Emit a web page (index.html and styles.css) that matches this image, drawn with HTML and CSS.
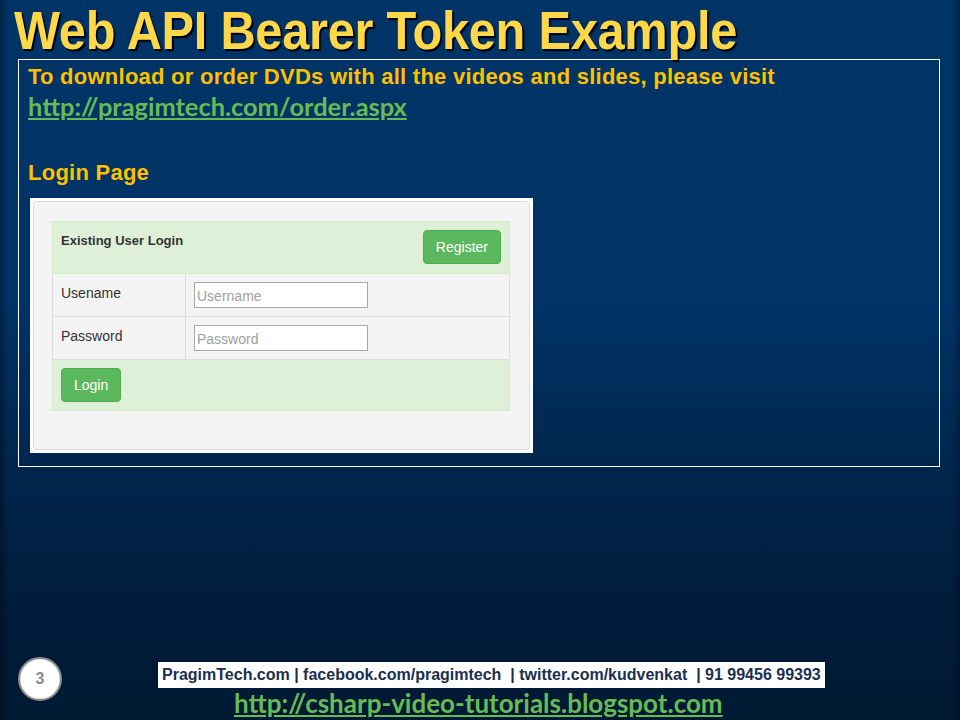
FILE: index.html
```html
<!DOCTYPE html>
<html>
<head>
<meta charset="utf-8">
<link rel="stylesheet" href="styles.css">
</head>
<body>
<div class="slide">
  <h1 class="title"><span class="title-text">Web API Bearer Token Example</span></h1>
  <div class="content">
    <p class="intro">To download or order DVDs with all the videos and slides, please visit</p>
    <a class="order-link" href="#">http://pragimtech.com/order.aspx</a>
    <h2 class="subhead">Login Page</h2>
    <div class="shot">
      <div class="panel">
        <table class="login">
          <tr class="head-row">
            <th colspan="2">
              <div class="head-inner">
                <span class="head-title">Existing User Login</span>
                <button class="btn">Register</button>
              </div>
            </th>
          </tr>
          <tr class="field-row">
            <td class="label">Usename</td>
            <td class="field"><input class="inp" type="text" placeholder="Username"></td>
          </tr>
          <tr class="field-row">
            <td class="label">Password</td>
            <td class="field"><input class="inp" type="password" placeholder="Password"></td>
          </tr>
          <tr class="foot-row">
            <td colspan="2"><button class="btn">Login</button></td>
          </tr>
        </table>
      </div>
    </div>
  </div>
  <div class="footer">
    <div class="num">3</div>
    <div class="footer-col">
      <div class="bar">PragimTech.com | facebook.com/pragimtech &nbsp;| twitter.com/kudvenkat &nbsp;| 91 99456 99393</div>
      <a class="blog-link" href="#">http://csharp-video-tutorials.blogspot.com</a>
    </div>
  </div>
</div>
</body>
</html>
```

FILE: styles.css
```css
html, body {
  margin: 0;
  padding: 0;
}
body {
  width: 960px;
  height: 720px;
  overflow: hidden;
}
.slide {
  width: 960px;
  height: 720px;
  display: flex;
  flex-direction: column;
  background:
    linear-gradient(to right, rgba(0,0,0,0.35) 0px, rgba(0,0,0,0) 8px, rgba(0,0,0,0) 952px, rgba(0,0,0,0.25) 960px),
    linear-gradient(to bottom, #003366 0%, #003366 42%, #00264d 65%, #001c3a 85%, #001933 100%);
}
.title {
  margin: 0;
  height: 59px;
  padding-left: 14px;
  font-family: "Liberation Sans Narrow", "Liberation Sans", Arial, sans-serif;
  font-weight: bold;
  font-size: 53px;
  line-height: 62px;
  color: #ffd84a;
  text-shadow: 2px 2px 1px #000;
  white-space: nowrap;
  letter-spacing: -0.3px;
}
.title-text {
  display: inline-block;
  transform: scaleX(0.92);
  transform-origin: left center;
}
.content {
  margin-left: 18px;
  width: 901px;
  height: 396px;
  border: 1px solid #fff;
  padding: 2px 10px 8px 9px;
}
.intro {
  margin: 0;
  font-family: "Liberation Sans", Arial, sans-serif;
  font-weight: bold;
  font-size: 22px;
  line-height: 29px;
  color: #ffc000;
  letter-spacing: 0.25px;
  white-space: nowrap;
}
.order-link {
  display: inline-block;
  font-family: Lato, "Liberation Sans", sans-serif;
  font-weight: bold;
  font-size: 25.4px;
  line-height: 30px;
  color: #66bb55;
  text-decoration: underline;
}
.subhead {
  margin: 38px 0 0 0;
  font-family: "Liberation Sans", Arial, sans-serif;
  font-weight: bold;
  font-size: 22px;
  line-height: 28px;
  color: #ffc000;
  letter-spacing: 0.25px;
}
.shot {
  margin-top: 11px;
  margin-left: 2px;
  width: 499px;
  height: 251px;
  background: #fff;
  border: 2px solid #fff;
}
.panel {
  width: 497px;
  height: 249px;
  margin: 1px 0 0 1px;
  background: #f4f4f4;
  border: 1px solid #dcdcdc;
  border-radius: 4px;
  box-sizing: border-box;
  padding: 19px 22px 0 18px;
}
.login {
  border-collapse: collapse;
  width: 458px;
  font-family: "Liberation Sans", Arial, sans-serif;
  font-size: 14px;
  color: #333;
}
.login td, .login th {
  border: 1px solid #dddddd;
  padding: 0;
  box-sizing: border-box;
}
.head-row th {
  background: #dff0d8;
  border-color: #d6e9c6;
  height: 52px;
  text-align: left;
  font-weight: bold;
  vertical-align: top;
  padding-top: 8px;
}
.head-inner {
  display: flex;
  justify-content: space-between;
  align-items: flex-start;
  padding: 0 8px 0 8px;
}
.head-title {
  padding-top: 3px;
  font-size: 13px;
}
.btn {
  background: #5cb85c;
  border: 1px solid #4cae4c;
  border-radius: 4px;
  color: #fff;
  font-family: "Liberation Sans", Arial, sans-serif;
  font-size: 14px;
  height: 34px;
  padding: 0 12px;
  line-height: 32px;
}
.field-row td {
  height: 43px;
  vertical-align: top;
}
.label {
  width: 133px;
  padding: 11px 0 0 8px !important;
  line-height: 16px;
}
.field {
  padding: 8px 0 0 8px !important;
}
.inp {
  box-sizing: border-box;
  width: 174px;
  height: 26px;
  border: 1px solid #a9a9a9;
  font-family: "Liberation Sans", Arial, sans-serif;
  font-size: 14px;
  padding: 2px 2px 0 2px;
  background: #fff;
  display: block;
}
.inp::placeholder {
  color: #a0a0a0;
}
.foot-row td {
  background: #dff0d8;
  border-color: #d6e9c6;
  height: 51px;
  padding: 8px 0 0 8px;
  vertical-align: top;
}
.footer {
  margin-top: auto;
  height: 63px;
  display: flex;
  align-items: flex-start;
}
.num {
  margin: 0 0 0 18px;
  width: 40px;
  height: 40px;
  border-radius: 50%;
  background: #fff;
  border: 2px solid #8a8a8a;
  box-shadow: inset 0 0 2px #bbb;
  color: #8c8c8c;
  font-family: "Liberation Sans", Arial, sans-serif;
  font-weight: bold;
  font-size: 16px;
  line-height: 40px;
  text-align: center;
}
.footer-col {
  display: flex;
  flex-direction: column;
  align-items: flex-start;
  padding-top: 5px;
  margin-left: 96px;
}
.bar {
  background: #fff;
  height: 26px;
  width: 667px;
  box-sizing: border-box;
  padding-left: 4px;
  font-family: "Liberation Sans", Arial, sans-serif;
  font-weight: bold;
  font-size: 16px;
  line-height: 26px;
  color: #1a2f50;
  white-space: nowrap;
}
.blog-link {
  margin-left: 76px;
  font-family: Lato, "Liberation Sans", sans-serif;
  font-weight: bold;
  font-size: 26px;
  line-height: 30px;
  color: #66bb55;
  text-decoration: underline;
  white-space: nowrap;
}
```
